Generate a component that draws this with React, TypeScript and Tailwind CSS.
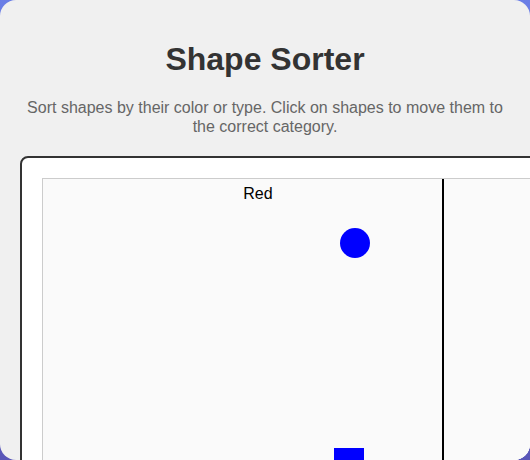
import React from 'react';

interface Shape {
    id: number;
    kind: 'circle' | 'square';
    color: string;
    x: number;
    y: number;
}

const shapes: Shape[] = [
    { id: 1, kind: 'circle', color: '#0000ff', x: 297, y: 49 },
    { id: 2, kind: 'square', color: '#0000ff', x: 291, y: 269 },
];

export default function App() {
    return (
        <div className="min-h-screen bg-gradient-to-b from-[#6a7ee6] to-[#5956b8]" style={{ fontFamily: '"Liberation Sans", Arial, sans-serif' }}>
            <div className="h-[460px] w-full overflow-hidden rounded-2xl bg-[#f0f0f0] p-5">
                <h1 className="mt-[21px] text-center text-[32px] font-bold leading-[37px] text-[#333]">
                    Shape Sorter
                </h1>
                <p className="mt-[21px] text-center text-base leading-[18.5px] text-[#666]">
                    Sort shapes by their color or type. Click on shapes to move them to the correct category.
                </p>
                <div className="mt-5 w-[700px] rounded-lg border-2 border-[#333] bg-white p-5">
                    <div className="relative h-[400px] w-[640px] border border-[#ccc] bg-[#fafafa]">
                        <div className="w-[430px] pt-[3px] text-center text-base text-black">Red</div>
                        <div className="absolute left-[399px] top-0 h-full w-[2px] bg-black" />
                        {shapes.map((s) => (
                            <div
                                key={s.id}
                                className={`absolute h-[30px] w-[30px] ${s.kind === 'circle' ? 'rounded-full' : ''}`}
                                style={{ left: s.x, top: s.y, backgroundColor: s.color }}
                            />
                        ))}
                    </div>
                </div>
            </div>
        </div>
    );
}
